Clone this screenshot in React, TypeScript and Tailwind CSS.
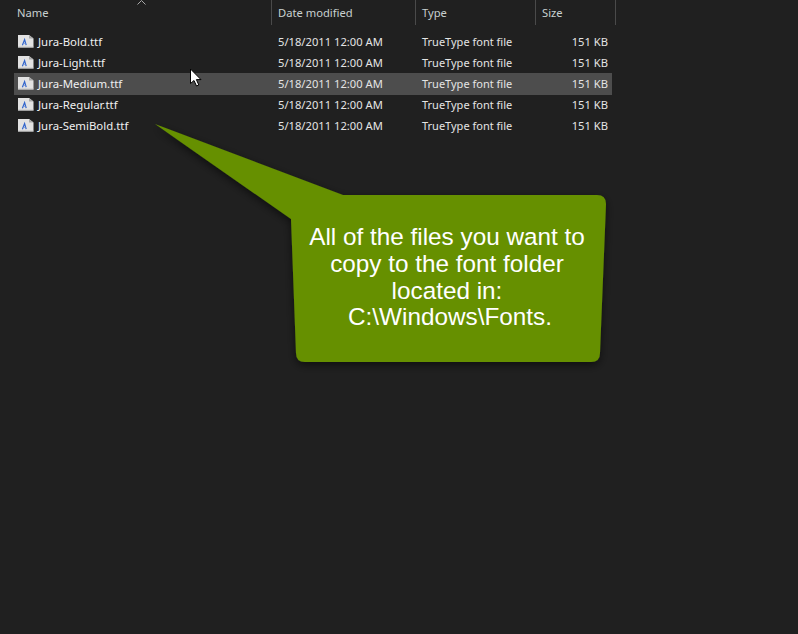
import React from 'react';

const files = ['Jura-Bold.ttf', 'Jura-Light.ttf', 'Jura-Medium.ttf', 'Jura-Regular.ttf', 'Jura-SemiBold.ttf'];

function FontIcon() {
  return (
    <svg width="16" height="16" viewBox="0 0 16 16" className="mr-[4px] shrink-0">
      <path d="M0 1 H11 L15.5 4.5 V13.5 H0 Z" fill="#e2e2e2" />
      <path d="M11 1 V4.5 H15.5 Z" fill="#a8a8a8" />
      <path d="M0 12.6 H15.5 V13.5 H0 Z" fill="#bdbdbd" />
      <path d="M4.4 11.2 L6.6 5.6 L8.2 11.2" fill="none" stroke="#2f63cc" strokeWidth="1.2" />
      <path d="M5.5 9.4 H7.6" stroke="#6f92dc" strokeWidth="0.8" />
    </svg>
  );
}

function Row({ name, selected }: { name: string; selected: boolean }) {
  return (
    <div
      className={`ml-[14px] grid w-[598px] grid-cols-[257px_144px_120px_77px] items-center text-[11.2px] leading-[12px] text-[#e4e4e4] ${
        selected ? '-mb-px h-[22px] bg-[#4d4d4d]' : 'h-[21px]'
      }`}
    >
      <div className="flex items-center pl-[4px]">
        <FontIcon />
        <span className="text-[11.4px] text-[#f0f0f0]">{name}</span>
      </div>
      <span className="pl-[7px]">5/18/2011 12:00 AM</span>
      <span className="pl-[7px] text-[11px]">TrueType font file</span>
      <span className="pr-[4px] text-right">151 KB</span>
    </div>
  );
}

export default function App() {
  return (
    <div className="relative h-[634px] w-[798px] overflow-hidden bg-[#202020] font-['Noto_Sans',sans-serif] text-[11.2px] leading-none">
      {/* column headers */}
      <div className="grid h-[25px] w-[616px] grid-cols-[272px_144px_120px_80px] items-center text-[#c8d0d0]">
        <span className="relative h-full border-r border-[#4a4a4a] pl-[17px] pt-[7px]">
          Name
          <svg width="9" height="5" viewBox="0 0 9 5" className="absolute left-[137px] top-0">
            <path d="M0.5 4.5 L4.5 0.5 L8.5 4.5" fill="none" stroke="#a8a8a8" />
          </svg>
        </span>
        <span className="h-full border-r border-[#4a4a4a] pl-[6px] pt-[7px]">Date modified</span>
        <span className="h-full border-r border-[#4a4a4a] pl-[6px] pt-[7px]">Type</span>
        <span className="h-full border-r border-[#4a4a4a] pl-[6px] pt-[7px]">Size</span>
      </div>

      <div className="mt-[6px] flex flex-col">
        {files.map(f => (
          <Row key={f} name={f} selected={f === 'Jura-Medium.ttf'} />
        ))}
      </div>

      {/* mouse pointer */}
      <svg width="13" height="20" viewBox="0 0 13 20" className="absolute left-[189px] top-[68px]">
        <path d="M1.5 1 V15.5 L5 12.5 L7.5 18 L9.8 17 L7.4 11.6 H12 Z" fill="#fff" stroke="#000" strokeWidth="1" />
      </svg>

      {/* callout */}
      <svg width="798" height="634" viewBox="0 0 798 634" className="absolute left-0 top-0">
        <defs>
          <filter id="callout-shadow" x="-10%" y="-10%" width="120%" height="120%">
            <feDropShadow dx="0" dy="3" stdDeviation="4" floodColor="#000" floodOpacity="0.55" />
          </filter>
        </defs>
        <path
          d="M155 124 L343 195 H597 Q606 195 606 204 L600 353 Q600 362 591 362 H305 Q296 362 296 353 L291 219 Z"
          fill="#669000"
          filter="url(#callout-shadow)"
        />
      </svg>
      <div className="absolute left-[296px] top-[224px] w-[302px] text-center font-['Liberation_Sans',sans-serif] text-[24.3px] leading-[26.8px] text-white">
        All of the files you want to
        <br />
        copy to the font folder
        <br />
        located in:
        <br />
        <span className="ml-[6px]">C:\Windows\Fonts.</span>
      </div>
    </div>
  );
}
